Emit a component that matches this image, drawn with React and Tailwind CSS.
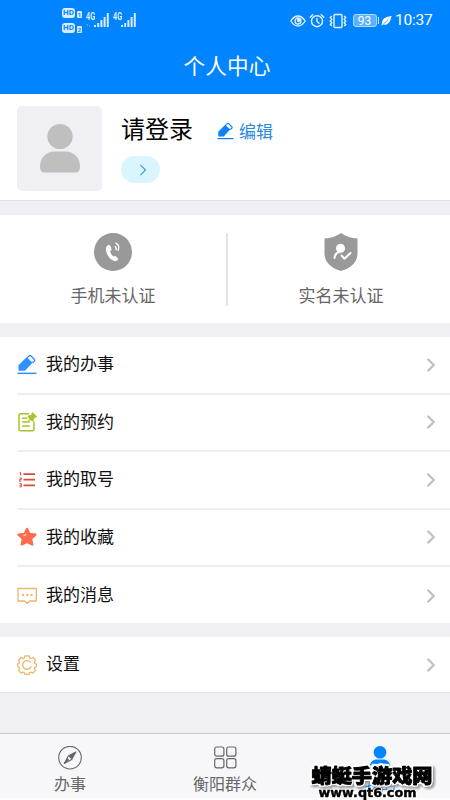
import { ChevronRight } from 'lucide-react';

const PencilIcon = ({ className }) => (
  <svg viewBox="0 0 20 20" className={className} fill="currentColor">
    <path d="M1.5 15.800V10.300L10.300 1.500 16 7.200 8 15.800z" />
    <path
      d="m11 2 1-1q1-.9 2 0l3.300 3.200q.9 1 0 2L15.700 7.800"
      fill="none"
      stroke="currentColor"
      strokeWidth="1.400"
      strokeLinejoin="round"
    />
    <path d="m11.800 3 3 3" stroke="#fff" strokeWidth="1.700" strokeLinecap="round" />
    <path d="M.5 17.600h19v1.500H.5z" />
  </svg>
);

const NoteIcon = ({ className }) => (
  <svg viewBox="0 0 20 20" className={className} fill="none" stroke="currentColor" strokeWidth="1.5" strokeLinecap="round">
    <path d="M11.5 1.7H3.500q-1.500 0-1.500 1.5v14q0 1.5 1.500 1.5h12q1.5 0 1.5-1.5V10M5.500 6.300h4.500M5.500 10h7M5.500 14h7" />
    <path d="m15.5.8 3.700 3.700-.8.8-.7-.2-1.600 1.600.1 1.500-.8.8-2-2-1.800 1.600 1.600-2-2-2 .8-.8 1.600.1 1.700-1.600-.2-.8z" fill="currentColor" strokeWidth="1.100" strokeLinejoin="round" />
  </svg>
);

const NumberListIcon = ({ className }) => (
  <svg viewBox="0 0 20 20" className={className} fill="none" stroke="currentColor">
    <path d="M6.500 4.200H18M6.500 9.700H18M6.500 15.300H18" strokeWidth="1.700" />
    <path d="m2.600 2.800 1-.6v3.200M2.500 8h1.800v1.600H2.600v1.700h1.900M2.500 13.600h1.800v3.300H2.400M2.700 15.200h1.600" strokeWidth="1" />
  </svg>
);

const StarIcon = ({ className }) => (
  <svg viewBox="0 0 20 20" className={className}>
    <path
      d="m10 1.800 2.500 5.100 6 .8-4.300 4.100 1.100 5.800-5.300-2.600-5.300 2.600 1.100-5.800L1.500 7.700l6-.8z"
      fill="currentColor"
      stroke="currentColor"
      strokeWidth="2.200"
      strokeLinejoin="round"
    />
    <path d="M6.600 8.800q1.600-.2 2.200-1.600" fill="none" stroke="#ffe4dd" strokeWidth="1.100" strokeLinecap="round" />
  </svg>
);

const MessageIcon = ({ className }) => (
  <svg viewBox="0 0 20 20" className={className} fill="none" stroke="currentColor" strokeWidth="1.3">
    <path d="M1 2.500h18.300v12.500h-6.600L10.200 17.500l-2.500-2.500H1z" strokeLinejoin="round" />
    <g fill="currentColor" stroke="none">
      <circle cx="5.900" cy="8.900" r="1.2" />
      <circle cx="10.200" cy="8.900" r="1.2" />
      <circle cx="14.500" cy="8.900" r="1.2" />
    </g>
  </svg>
);

const GearIcon = ({ className }) => (
  <svg viewBox="0 0 20 20" className={className} fill="none" stroke="currentColor" strokeWidth="1.3" strokeLinejoin="round" strokeLinecap="round">
    <path d="M8 .8h4l.6 2.100 1.400.6 2-1 2.400 2.600-1 2 .5 1.400 1.600.6v2.400l-1.600.8-.5 1.400 1 1.900-2.500 2.500-2-1-1.400.6-.5 1.600H8l-.6-1.600-1.400-.6-1.900 1-2.500-2.600 1-1.900-.6-1.400L.7 11.500V9.100L2 8.500l.6-1.400-1-2L4 2.500l2 1 1.400-.6z" />
    <path d="M14 11.900a4.400 4.400 0 1 1-.6-4.800" />
  </svg>
);

const MENU = [
  { label: '我的办事', icon: PencilIcon, color: 'text-[#3390ff]' },
  { label: '我的预约', icon: NoteIcon, color: 'text-[#a5c52b]' },
  { label: '我的取号', icon: NumberListIcon, color: 'text-[#d84d38]' },
  { label: '我的收藏', icon: StarIcon, color: 'text-[#ff6b50]' },
  { label: '我的消息', icon: MessageIcon, color: 'text-[#ecb76b]' },
];

function SignalBars() {
  return (
    <svg viewBox="0 0 16 15" className="h-[15px] w-4" fill="#d9ecff">
      <path d="M0 12h2v2H0zM3.200 10h2v4h-2zM6.400 7h2v7h-2zM9.600 4h2v10h-2zM12.800 0h2v14h-2z" />
    </svg>
  );
}

function HdBadge({ sim }) {
  return (
    <div className="flex items-end gap-[2px]">
      <span className="flex h-[10px] w-[13px] items-center justify-center rounded-[3px] bg-[#d9ecff] text-[8px] leading-none font-bold text-[#0084ff]">HD</span>
      <span className="flex h-[7px] w-[5px] items-center justify-center rounded-[1px] bg-[#d9ecff] text-[6px] leading-none font-bold text-[#0084ff]">{sim}</span>
    </div>
  );
}

function NetworkLabel() {
  return <span className="w-[9px] origin-left scale-x-75 text-[10px] leading-[8px] font-bold text-[#d9ecff]">4G</span>;
}

function StatusBar() {
  return (
    <div className="flex h-[41px] items-center justify-between pr-[17px] pl-[62px] font-['Roboto',sans-serif] text-white">
      <div className="flex items-start">
        <div className="flex flex-col gap-[5px]">
          <HdBadge sim="1" />
          <HdBadge sim="2" />
        </div>
        <div className="mt-[5px] ml-[4px] flex w-[8px] flex-col">
          <NetworkLabel />
          <span className="text-[5px] leading-[8px] text-[#d9ecff] opacity-60">↑↓</span>
        </div>
        <div className="mt-[5px]"><SignalBars /></div>
        <div className="mt-[5px] ml-[3px] flex w-[8px]"><NetworkLabel /></div>
        <div className="mt-[5px]"><SignalBars /></div>
      </div>

      <div className="flex items-center">
        <svg viewBox="0 0 16 14" className="h-[14px] w-4" fill="none" stroke="#e6f3ff" strokeWidth="1.3">
          <path d="M.8 7Q4 2 8 2t7.200 5Q12 12 8 12T.8 7z" />
          <circle cx="8" cy="7" r="3" />
          <circle cx="8.500" cy="6.500" r="1" fill="#e6f3ff" />
        </svg>
        <svg viewBox="0 0 16 16" className="ml-[3px] h-4 w-4" fill="none" stroke="#e6f3ff" strokeWidth="1.4" strokeLinecap="round">
          <circle cx="8" cy="8.200" r="5.500" />
          <path d="M8 5.500v3l2 1.800M1.200 4.200 3.700 1.700M14.800 4.200 12.300 1.700" />
        </svg>
        <svg viewBox="0 0 20 16" className="ml-[3px] h-4 w-[20px]" fill="none" stroke="#e6f3ff" strokeWidth="1.4">
          <rect x="6" y="1.500" width="8" height="13" rx="1" />
          <path d="m3.800 3-1.500 1.600 1.500 1.700-1.500 1.700 1.500 1.700-1.500 1.700 1.500 1.600M16.200 3l1.500 1.600-1.500 1.700 1.500 1.700-1.500 1.700 1.500 1.700-1.500 1.600" />
        </svg>
        <div className="ml-[5px] flex items-center gap-px">
          <span className="flex h-[13px] w-[24px] items-center justify-center rounded-[3px] border border-[#b3daff] bg-[#5cb0ff] text-[12px] leading-none">93</span>
          <span className="h-[7px] w-[1.5px] bg-[#cce6ff]" />
        </div>
        <svg viewBox="0 0 12 12" className="mr-[3px] ml-[2px] h-[12px] w-[11px]">
          <path d="M11.500.5C7 1.200 1.500 2.500 1.200 7.500L.4 11.300l2-1.200C8 11 10.500 6 11.500.5z" fill="#fff" />
          <path d="M1.500 10.500 7.800 4.500" stroke="#0084ff" strokeWidth=".8" />
        </svg>
        <span className="w-[38px] pt-px text-[15.5px] leading-none tracking-[-0.2px] whitespace-nowrap">10:37</span>
      </div>
    </div>
  );
}

function MenuRow({ label, icon: Icon, color, last }) {
  return (
    <div className={`ml-[17px] flex h-[57.5px] items-center ${last ? '' : 'border-b-2 border-[#eeeeef]'}`}>
      <Icon className={`h-5 w-5 shrink-0 ${color}`} />
      <span className={`ml-[9px] flex-1 text-[17px] leading-6 text-[#111] ${last ? '' : 'pt-px'}`}>{label}</span>
      <ChevronRight className="mr-[8px] h-[22px] w-[22px] text-[#c0c0c4]" strokeWidth={2.6} />
    </div>
  );
}

function Watermark() {
  return (
    <svg viewBox="0 0 150 40" className="absolute right-0 bottom-0 h-10 w-[150px]">
      <g fill="#000" stroke="#000" strokeLinejoin="round">
        <text
          x="11.500"
          y="23"
          textLength="121"
          lengthAdjust="spacingAndGlyphs"
          strokeWidth=".9"
          className="font-['Noto_Sans_CJK_SC',sans-serif] text-[19px] font-black [filter:drop-shadow(1.5px_0_0_#fff)_drop-shadow(-1.5px_0_0_#fff)_drop-shadow(0_1.5px_0_#fff)_drop-shadow(0_-1.5px_0_#fff)_drop-shadow(2px_2px_1px_#999)]"
        >
          蜻蜓手游戏网
        </text>
        <text
          x="18.500"
          y="36.500"
          textLength="98"
          lengthAdjust="spacingAndGlyphs"
          strokeWidth=".4"
          className="font-['DejaVu_Sans',sans-serif] text-[11.5px] font-bold [filter:drop-shadow(1px_0_0_#fff)_drop-shadow(-1px_0_0_#fff)_drop-shadow(0_1px_0_#fff)]"
        >
          www.qt6.com
        </text>
      </g>
    </svg>
  );
}

export default function App() {
  return (
    <div className="relative flex h-[800px] w-[450px] flex-col overflow-hidden bg-[#efeff4] font-['Liberation_Sans','Noto_Sans_CJK_SC',sans-serif]">
      <header className="h-[94px] shrink-0 bg-[#0084ff]">
        <StatusBar />
        <h1 className="pt-[10px] pl-[4px] text-center text-[21.7px] leading-8 text-white">个人中心</h1>
      </header>

      <section className="flex h-[107px] shrink-0 border-b border-[#e2e2e5] bg-white pt-[12px] pl-[17px]">
        <div className="flex h-[85px] w-[85px] items-center justify-center rounded-[5px] bg-[#efeff4]">
          <svg viewBox="0 0 42 50" className="-mt-px h-[50px] w-[42px]" fill="#bfbfbf">
            <circle cx="21" cy="13.500" r="12.600" />
            <path d="M15 28.500h12c8 0 14 7 14 15 0 4-1.500 6-5 6H6c-3.500 0-5-2-5-6 0-8 6-15 14-15z" />
          </svg>
        </div>
        <div className="ml-[19px]">
          <div className="flex h-[47px] items-center">
            <span className="pt-px text-[24px] leading-8 text-black">请登录</span>
            <PencilIcon className="mt-[4px] ml-[24px] h-[17px] w-[17px] text-[#0f83f5]" />
            <span className="mt-[6px] ml-[5px] text-[17px] leading-6 text-[#2b89dc]">编辑</span>
          </div>
          <div className="mt-[3px] flex h-[27px] w-[39px] items-center justify-center rounded-full bg-[#d9f6fe] pl-[5px]">
            <svg viewBox="0 0 8 12" className="h-[12px] w-2" fill="none" stroke="#4497d5" strokeWidth="1.2">
              <path d="m1.500.8 5 5.200-5 5.200" />
            </svg>
          </div>
        </div>
      </section>

      <section className="mt-[14px] flex h-[108px] shrink-0 items-start bg-white pt-[18px] text-[17px] text-[#666]">
        <div className="flex w-[226px] flex-col items-center">
          <svg viewBox="0 0 38 38" className="h-[38px] w-[38px]">
            <circle cx="19" cy="19" r="19" fill="#999" />
            <path d="M12.700 13.200c1.500-1.700 3.200-1.500 4 .3l.8 2.500c.2 1-.4 1.700-1.400 2.300.5 2 1.700 3.900 3.200 5.200 1-.6 1.900-.8 2.700-.1l1.700 1.600c1 1 .4 2.400-1.500 3-5.700 1.100-12.600-9.700-9.500-14.800z" fill="#fff" />
            <path d="M21.300 13.700q1.300 1 .9 3M22 10.200q4 2.300 2.200 7" fill="none" stroke="#fff" strokeWidth="1.400" strokeLinecap="round" />
          </svg>
          <span className="mt-[14px] leading-6">手机未认证</span>
        </div>
        <div className="h-[73px] w-[2px] shrink-0 bg-[#e4e4e6]" />
        <div className="flex flex-1 flex-col items-center pl-[4px]">
          <svg viewBox="0 0 34 38" className="h-[38px] w-[34px]">
            <path d="M17 0q7 5 16.500 5.500V20q0 13-16.500 18Q.5 33 .5 20V5.500Q10 5 17 0z" fill="#999" />
            <circle cx="16.500" cy="15.300" r="4.500" fill="#fff" />
            <path d="M10.500 25q.6-5 5-6.200M17.500 22.500l3 3.200 6-5.700" fill="none" stroke="#fff" strokeWidth="2" strokeLinecap="round" strokeLinejoin="round" />
          </svg>
          <span className="mt-[14px] leading-6">实名未认证</span>
        </div>
      </section>

      <section className="mt-[14px] h-[286px] shrink-0 bg-white">
        {MENU.map((item, i) => (
          <MenuRow key={item.label} {...item} last={i === MENU.length - 1} />
        ))}
      </section>

      <section className="mt-[14px] h-[56px] shrink-0 border-b border-[#e2e2e5] bg-white">
        <div className="-mt-px">
          <MenuRow label="设置" icon={GearIcon} color="text-[#ecb76b]" last />
        </div>
      </section>

      <nav className="mt-auto mb-[2px] flex h-[65px] shrink-0 border-t border-[#c8c8cf] bg-[#f7f7fa] text-[16px] text-[#666] shadow-[0_2px_0_#fff]">
        <div className="flex w-[140px] flex-col items-center pt-[12px]">
          <svg viewBox="0 0 24 24" className="h-6 w-6" fill="none" stroke="currentColor" strokeWidth="1.100">
            <circle cx="12" cy="11.700" r="11.300" />
            <path d="m17.800 6-7.500 4-4 7.500 7.400-4z" strokeLinejoin="round" />
            <path d="m17.800 6-7.500 4 3.400 3.500zM6.300 17.500l5-3.500-2-2z" fill="currentColor" stroke="none" />
          </svg>
          <span className="mt-[3px] leading-6">办事</span>
        </div>
        <div className="flex w-[170px] flex-col items-center pt-[12px]">
          <svg viewBox="0 0 24 24" className="h-6 w-6" fill="none" stroke="currentColor" strokeWidth="1.200">
            <rect x="1.700" y="1" width="9.200" height="9.200" rx="2" />
            <rect x="13.700" y="1" width="9.200" height="9.200" rx="2" />
            <rect x="1.700" y="12.600" width="9.200" height="9.200" rx="2" />
            <rect x="13.700" y="12.600" width="9.200" height="9.200" rx="2" />
          </svg>
          <span className="mt-[3px] leading-6">衡阳群众</span>
        </div>
        <div className="flex w-[140px] flex-col items-center pt-[12px] text-[#0084ff]">
          <svg viewBox="0 0 24 24" className="h-6 w-6" fill="currentColor">
            <circle cx="12" cy="6.300" r="6.300" />
            <path d="M8 13.500h8q6 1 6.500 8 0 2.500-2.500 2.500H4q-2.500 0-2.500-2.500.5-7 6.500-8z" />
          </svg>
          <span className="mt-[3px] leading-6">我的</span>
        </div>
      </nav>

      <Watermark />
    </div>
  );
}
